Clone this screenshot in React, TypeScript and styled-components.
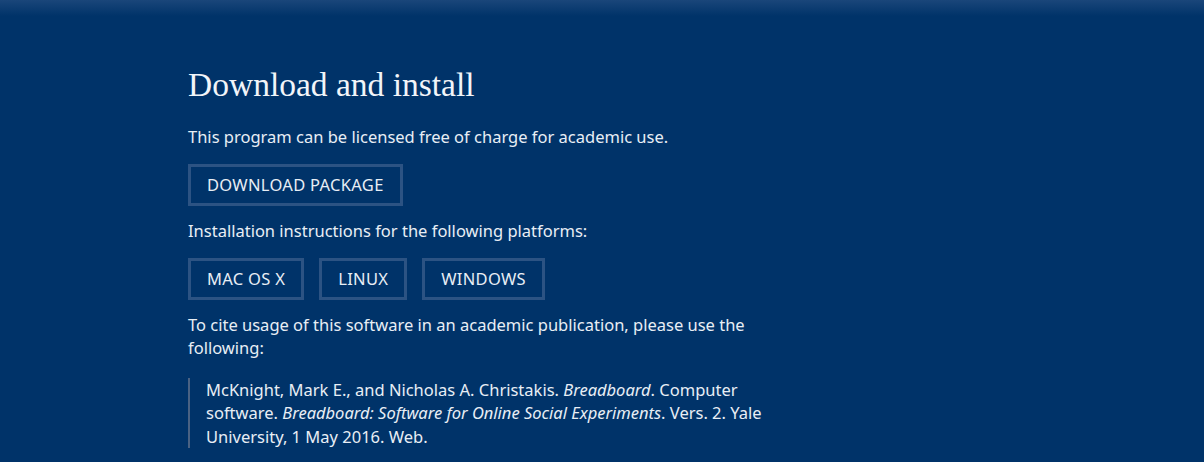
import React from 'react'
import styled, { createGlobalStyle } from 'styled-components'

const GlobalStyle = createGlobalStyle`
  html, body {
    margin: 0;
    padding: 0;
    background: #003369;
  }
`

const Page = styled.div`
  min-height: 462px;
  background: linear-gradient(to bottom, #1a467a 0px, #003369 16px, #003369 100%);
  color: #e8eef5;
  font-family: 'Noto Sans', 'Open Sans', sans-serif;
  font-size: 16.5px;
  overflow: hidden;
`

const Container = styled.div`
  width: 828px;
  margin: 0 auto;
  padding-top: 66px;
`

const Column = styled.div`
  width: 615px;
`

const Heading = styled.h2`
  font-family: 'Liberation Serif', 'Times New Roman', serif;
  font-weight: normal;
  font-size: 33.5px;
  line-height: 38px;
  margin: 0 0 21px;
  color: #f2f5f9;
`

const Text = styled.p`
  margin: 0 0 16px;
  line-height: 23px;
`

const ButtonRow = styled.div`
  display: flex;
  gap: 15px;
  margin: 0 0 13px;
`

const OutlineButton = styled.a`
  display: inline-block;
  box-sizing: border-box;
  height: 42px;
  line-height: 36px;
  padding: 0 16px;
  border: 3px solid #2c5383;
  color: #e8eef5;
  text-decoration: none;
  text-transform: uppercase;
  letter-spacing: 0.3px;
  cursor: pointer;
`

const Citation = styled.blockquote`
  margin: 19px 0 0;
  padding: 0 0 0 16px;
  width: 600px;
  border-left: 2px solid #4a6283;
  line-height: 23.3px;
`

export default function App() {
  return (
    <Page>
      <GlobalStyle />
      <Container>
        <Column>
          <Heading>Download and install</Heading>
          <Text>This program can be licensed free of charge for academic use.</Text>
          <ButtonRow>
            <OutlineButton>Download Package</OutlineButton>
          </ButtonRow>
          <Text>Installation instructions for the following platforms:</Text>
          <ButtonRow>
            <OutlineButton>Mac OS X</OutlineButton>
            <OutlineButton>Linux</OutlineButton>
            <OutlineButton>Windows</OutlineButton>
          </ButtonRow>
          <Text>To cite usage of this software in an academic publication, please use the following:</Text>
          <Citation>
            McKnight, Mark E., and Nicholas A. Christakis. <em>Breadboard</em>. Computer software.{' '}
            <em>Breadboard: Software for Online Social Experiments</em>. Vers. 2. Yale University, 1 May 2016. Web.
          </Citation>
        </Column>
      </Container>
    </Page>
  )
}
